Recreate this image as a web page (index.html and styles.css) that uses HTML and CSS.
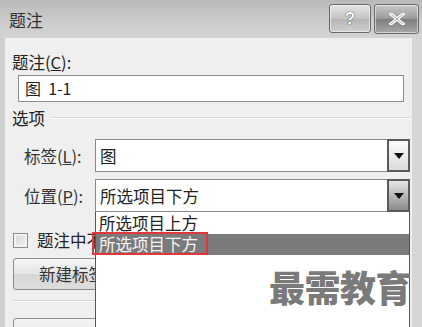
FILE: index.html
```html
<!DOCTYPE html>
<html lang="zh-CN">
<head>
  <meta charset="UTF-8" />
  <title>题注</title>
  <link rel="stylesheet" href="styles.css">
</head>
<body>
  <div class="window">
    <div class="titlebar">
      <span class="title">题注</span>
      <div class="caption-buttons">
        <div class="cap-btn help-btn">?</div>
        <div class="cap-btn close-btn">
          <svg width="16" height="12" viewBox="0 0 16 12">
            <path d="M2 1 L14 11 M14 1 L2 11" stroke="#fff" stroke-width="3.2" stroke-linecap="square"/>
            <path d="M2 1 L14 11 M14 1 L2 11" stroke="#555" stroke-width="1" fill="none" opacity="0.5"/>
          </svg>
        </div>
      </div>
    </div>

    <div class="panel">
      <div class="field-label">题注(<u>C</u>):</div>
      <div class="text-input">图&nbsp; 1-1</div>

      <div class="group-head">
        <span>选项</span>
        <span class="group-line"></span>
      </div>

      <div class="combo-row">
        <span class="combo-label">标签(<u>L</u>):</span>
        <div class="combo">
          <span class="combo-value">图</span>
          <span class="combo-btn"><i class="arrow"></i></span>
        </div>
      </div>
      <div class="combo-row">
        <span class="combo-label">位置(<u>P</u>):</span>
        <div class="combo">
          <span class="combo-value">所选项目下方</span>
          <span class="combo-btn pressed"><i class="arrow"></i></span>
        </div>
      </div>

      <div class="check-row">
        <span class="checkbox"></span>
        <span>题注中不包含标签(<u>E</u>)</span>
      </div>

      <div class="push-btn">新建标签(<u>N</u>)...</div>
      <div class="separator"></div>
      <div class="push-btn">编号(<u>U</u>)...</div>
    </div>

    <!-- open dropdown list of the 位置 combo -->
    <div class="drop-list">
      <div class="drop-item">所选项目上方</div>
      <div class="drop-item selected">所选项目下方</div>
    </div>
    <div class="mark-box"></div>

    <div class="watermark">最需教育</div>
  </div>
</body>
</html>
```

FILE: styles.css
```css
body {
  margin: 0;
  font-family: "Noto Sans CJK SC", "Liberation Sans", sans-serif;
  background: #fff;
}
.window {
  position: relative;
  width: 422px;
  height: 327px;
  overflow: hidden;
  background: linear-gradient(90deg, #cfcfcf, #d6d6d6);
  color: #222;
}
.titlebar {
  height: 38px;
  display: flex;
  align-items: flex-start;
  justify-content: space-between;
  background: linear-gradient(180deg, #b9b9b9, #cdcdcd 60%, #d3d3d3);
}
.title {
  font-size: 17px;
  line-height: 20px;
  margin: 10px 0 0 9px;
  color: #333;
}
.caption-buttons {
  display: flex;
  gap: 3px;
  margin: 4px 3px 0 0;
}
.cap-btn {
  height: 27px;
  border: 1px solid #6a6a6a;
  border-radius: 3px;
  display: flex;
  align-items: center;
  justify-content: center;
  box-shadow: inset 0 0 0 1px rgba(255, 255, 255, 0.5);
}
.help-btn {
  width: 40px;
  background: linear-gradient(180deg, #e4e4e4, #c4c4c4 50%, #b4b4b4 51%, #cfcfcf);
  font-family: "Liberation Sans", sans-serif;
  font-weight: bold;
  font-size: 17px;
  color: #fff;
  text-shadow: 0 0 1px #444, 0 0 1px #444;
}
.close-btn {
  width: 43px;
  height: 28px;
  background: linear-gradient(180deg, #c8c8c8, #9a9a9a 50%, #7e7e7e 51%, #a8a8a8);
}
.panel {
  margin: 0 10px 0 5px;
  height: 289px;
  background: #efefef;
  padding: 14px 0 0 7px;
  box-sizing: border-box;
  font-size: 16.5px;
}
.field-label {
  line-height: 20px;
}
.text-input {
  margin: 3px 0 0 6px;
  width: 386px;
  height: 27px;
  box-sizing: border-box;
  border: 1px solid #8c8c8c;
  background: #fff;
  padding-left: 6px;
  line-height: 25px;
  font-size: 16px;
}
.group-head {
  margin-top: 6px;
  display: flex;
  align-items: center;
  gap: 6px;
  line-height: 20px;
}
.group-line {
  flex: 1;
  border-top: 1px solid #d6d6d6;
  border-bottom: 1px solid #fafafa;
}
.combo-row {
  display: flex;
  align-items: center;
  margin-top: 11px;
  padding-left: 12px;
}
.combo-row + .combo-row {
  margin-top: 7px;
}
.combo-label {
  width: 71px;
  color: #333;
}
.combo {
  width: 315px;
  height: 33px;
  box-sizing: border-box;
  border: 1px solid #8a8a8a;
  background: #fff;
  display: flex;
  align-items: center;
  justify-content: space-between;
}
.combo-value {
  padding-left: 4px;
}
.combo-btn {
  width: 23px;
  height: 33px;
  margin: -1px -1px -1px 0;
  box-sizing: border-box;
  border: 2px solid #5a5a5a;
  background: linear-gradient(180deg, #fafafa, #dcdcdc);
  display: flex;
  align-items: center;
  justify-content: center;
}
.combo-btn.pressed {
  background: linear-gradient(180deg, #e6e6e6, #b0b0b0 60%, #8a8a8a);
}
.arrow {
  width: 0;
  height: 0;
  border-left: 5px solid transparent;
  border-right: 5px solid transparent;
  border-top: 6px solid #111;
}
.check-row {
  margin-top: 18px;
  display: flex;
  align-items: center;
  gap: 9px;
  line-height: 20px;
  padding-left: 1px;
}
.checkbox {
  width: 13px;
  height: 13px;
  border: 1px solid #8e8e8e;
  background: linear-gradient(135deg, #d4d4d4, #f4f4f4);
  box-shadow: inset 0 0 0 2px #f2f2f2;
}
.push-btn {
  margin-top: 8px;
  margin-left: 1px;
  width: 150px;
  height: 32px;
  box-sizing: border-box;
  border: 1px solid #8c8c8c;
  border-radius: 3px;
  background: linear-gradient(180deg, #f6f6f6, #e4e4e4 50%, #d6d6d6 51%, #dedede);
  display: flex;
  align-items: center;
  padding-left: 25px;
  color: #333;
}
.separator {
  margin: 10px 0 0 1px;
  width: 200px;
  border-top: 1px solid #d4d4d4;
  border-bottom: 1px solid #fbfbfb;
}
.separator + .push-btn {
  margin-top: 16px;
  height: 36px;
  padding-top: 6px;
}
.drop-list {
  position: absolute;
  left: 95px;
  top: 212px;
  width: 315px;
  height: 120px;
  box-sizing: border-box;
  border: 1px solid #555;
  border-top: none;
  background: #fff;
  font-size: 16.5px;
  padding-top: 1px;
}
.drop-item {
  height: 20px;
  line-height: 20px;
  padding-left: 3px;
  color: #222;
}
.drop-item.selected {
  margin-top: 1px;
  height: 21px;
  line-height: 21px;
  background: #7b7b7b;
  color: #f4f4f4;
}
.mark-box {
  position: absolute;
  left: 92px;
  top: 232px;
  width: 116px;
  height: 23px;
  box-sizing: border-box;
  border: 2px solid #e0373a;
}
.watermark {
  position: absolute;
  left: 269px;
  top: 266px;
  font-size: 36px;
  line-height: 40px;
  font-weight: 900;
  color: #7a7a7a;
  letter-spacing: -0.5px;
}
```
